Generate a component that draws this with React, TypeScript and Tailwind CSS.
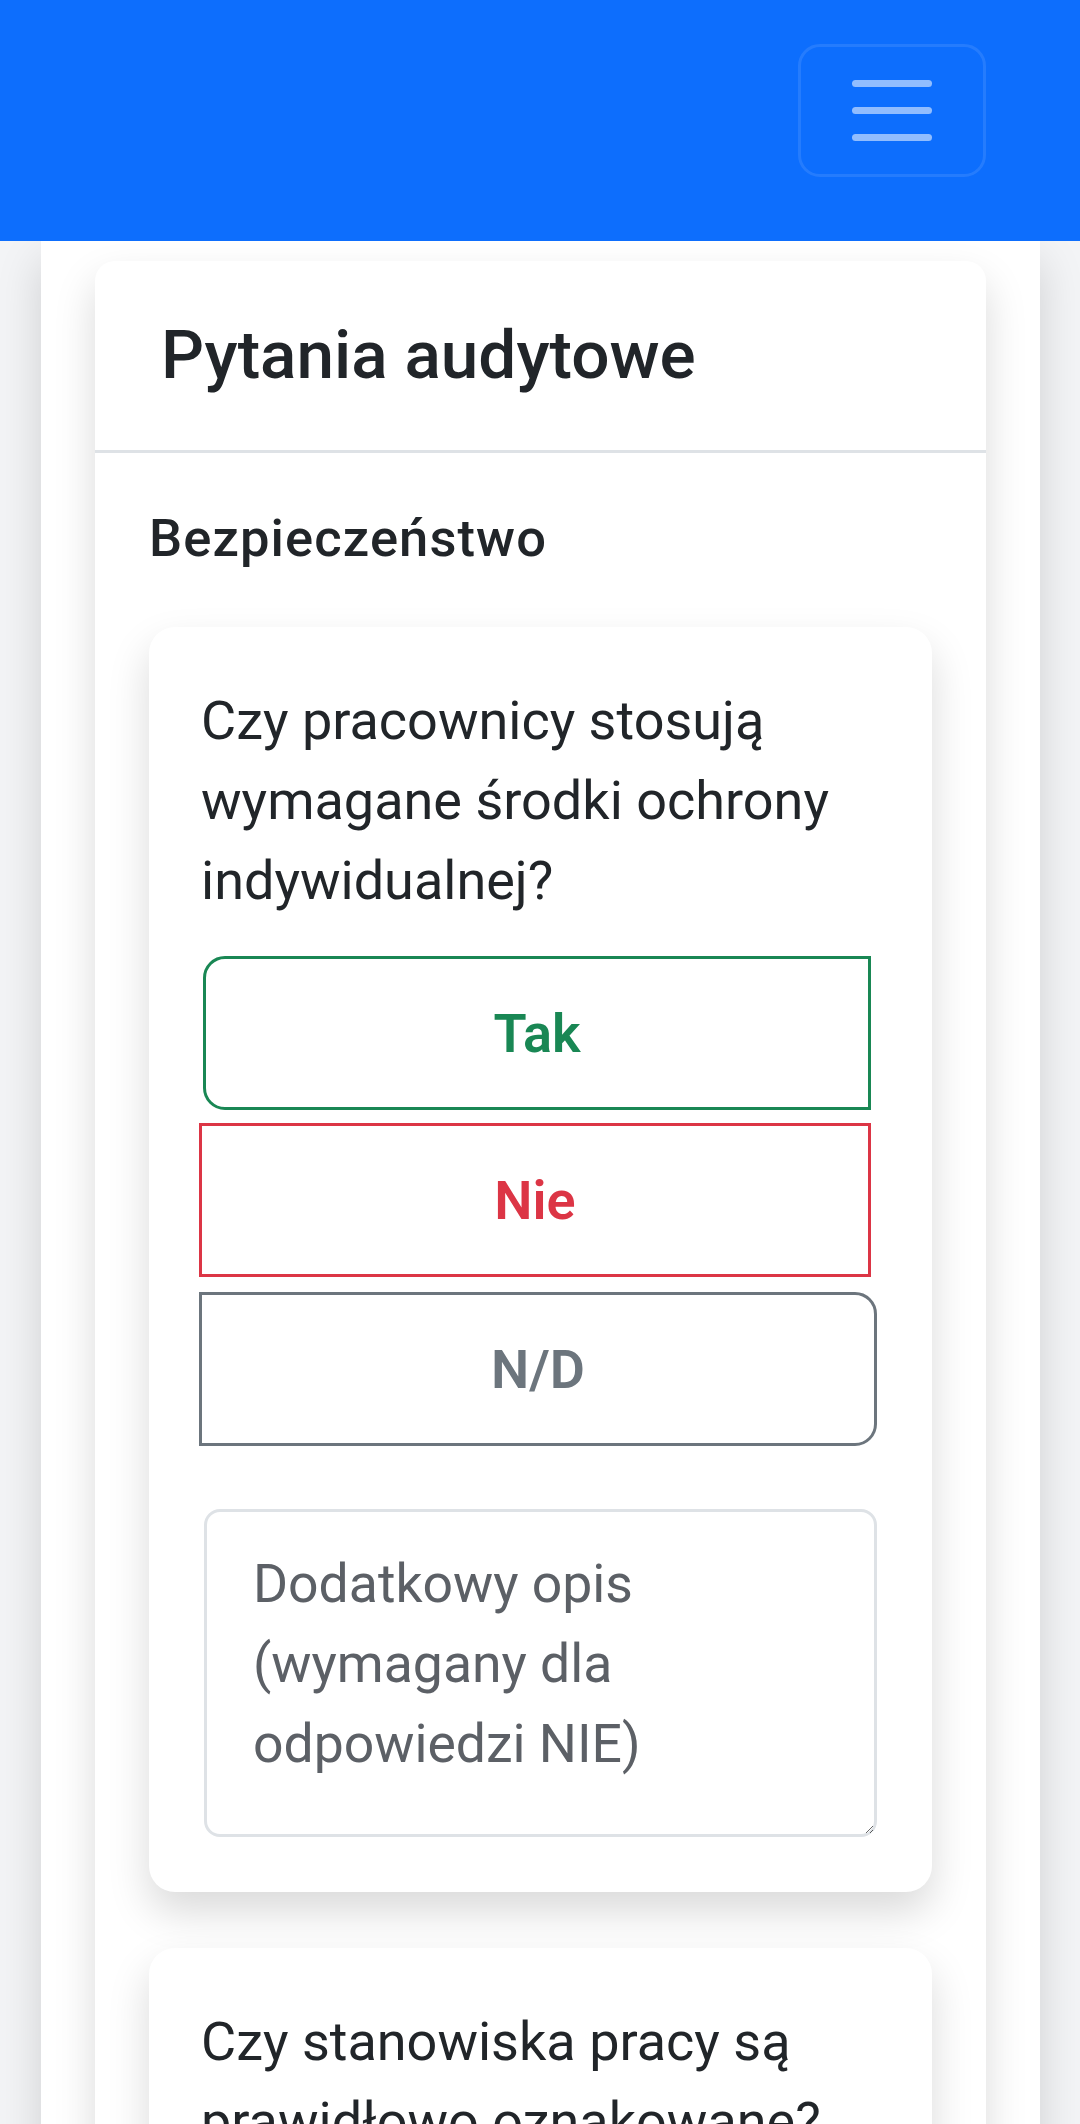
import React from "react";

const answers = [
  {
    key: "tak",
    label: "Tak",
    className:
      "h-[154px] ml-[4px] mr-[6px] border-[3px] border-[#198754] text-[#198754] rounded-l-[22px]",
  },
  {
    key: "nie",
    label: "Nie",
    className:
      "h-[154px] mt-[13px] mr-[6px] border-[3px] border-[#dc3545] text-[#dc3545]",
  },
  {
    key: "nd",
    label: "N/D",
    className:
      "h-[154px] mt-[15px] border-[3px] border-[#6c757d] text-[#6c757d] rounded-r-[22px]",
  },
];

const QuestionCard = ({ question }: { question: string }) => {
  return (
    <div className="bg-white rounded-[26px] shadow-[0_20px_42px_rgba(0,0,0,0.15)] pt-[54px] pb-[55px] pl-[50px] pr-[55px]">
      <p className="pl-[2px] text-[54px] leading-[80px] text-[#212529]">{question}</p>
      <div className="flex flex-col mt-[35px]">
        {answers.map((a) => (
          <button
            key={a.key}
            type="button"
            className={`bg-white text-[54px] font-semibold flex items-center justify-center ${a.className}`}
          >
            {a.label}
          </button>
        ))}
      </div>
      <textarea
        rows={3}
        placeholder="Dodatkowy opis (wymagany dla odpowiedzi NIE)"
        className="mt-[63px] ml-[5px] block w-[673px] h-[328px] border-[3px] border-[#dee2e6] rounded-[16px] pt-[32px] pl-[46px] pr-[40px] text-[53.5px] leading-[80px] text-[#212529] placeholder:text-[#5c6066] outline-none"
      />
    </div>
  );
};

export default function App() {
  return (
    <div className="min-h-[2124px] bg-[#f3f4f6] font-['Roboto','Liberation_Sans',sans-serif] overflow-hidden">
      <nav className="relative z-10 h-[241px] bg-[#0d6efd] flex justify-end items-start pt-[44px] pr-[94px]">
        <button
          type="button"
          className="w-[188px] h-[133px] rounded-[22px] border-[3px] border-[rgba(255,255,255,0.1)] flex flex-col items-center justify-center gap-[20px]"
          aria-label="Menu"
        >
          <span className="block w-[80px] h-[7px] rounded-full bg-[rgba(255,255,255,0.55)]" />
          <span className="block w-[80px] h-[7px] rounded-full bg-[rgba(255,255,255,0.55)]" />
          <span className="block w-[80px] h-[7px] rounded-full bg-[rgba(255,255,255,0.55)]" />
        </button>
      </nav>

      <main className="ml-[41px] w-[999px] bg-white shadow-[0_20px_42px_rgba(0,0,0,0.15)] px-[54px] pt-[20px] pb-[60px] min-h-[1883px]">
        <section className="bg-white rounded-[20px] shadow-[0_20px_42px_rgba(0,0,0,0.15)]">
          <header className="pt-[54px] pb-[55px] pl-[66px] border-b-[3px] border-[#dee2e6]">
            <h2 className="text-[67.5px] leading-[80px] font-medium text-[#212529]">Pytania audytowe</h2>
          </header>
          <div className="px-[54px] pt-[56px] pb-[56px]">
            <h5 className="text-[52.5px] leading-[59px] tracking-[1.1px] font-medium text-[#212529]">Bezpieczeństwo</h5>
            <div className="mt-[59px] flex flex-col gap-[56px]">
              <QuestionCard question="Czy pracownicy stosują wymagane środki ochrony indywidualnej?" />
              <QuestionCard question="Czy stanowiska pracy są prawidłowo oznakowane?" />
            </div>
          </div>
        </section>
      </main>
    </div>
  );
}
